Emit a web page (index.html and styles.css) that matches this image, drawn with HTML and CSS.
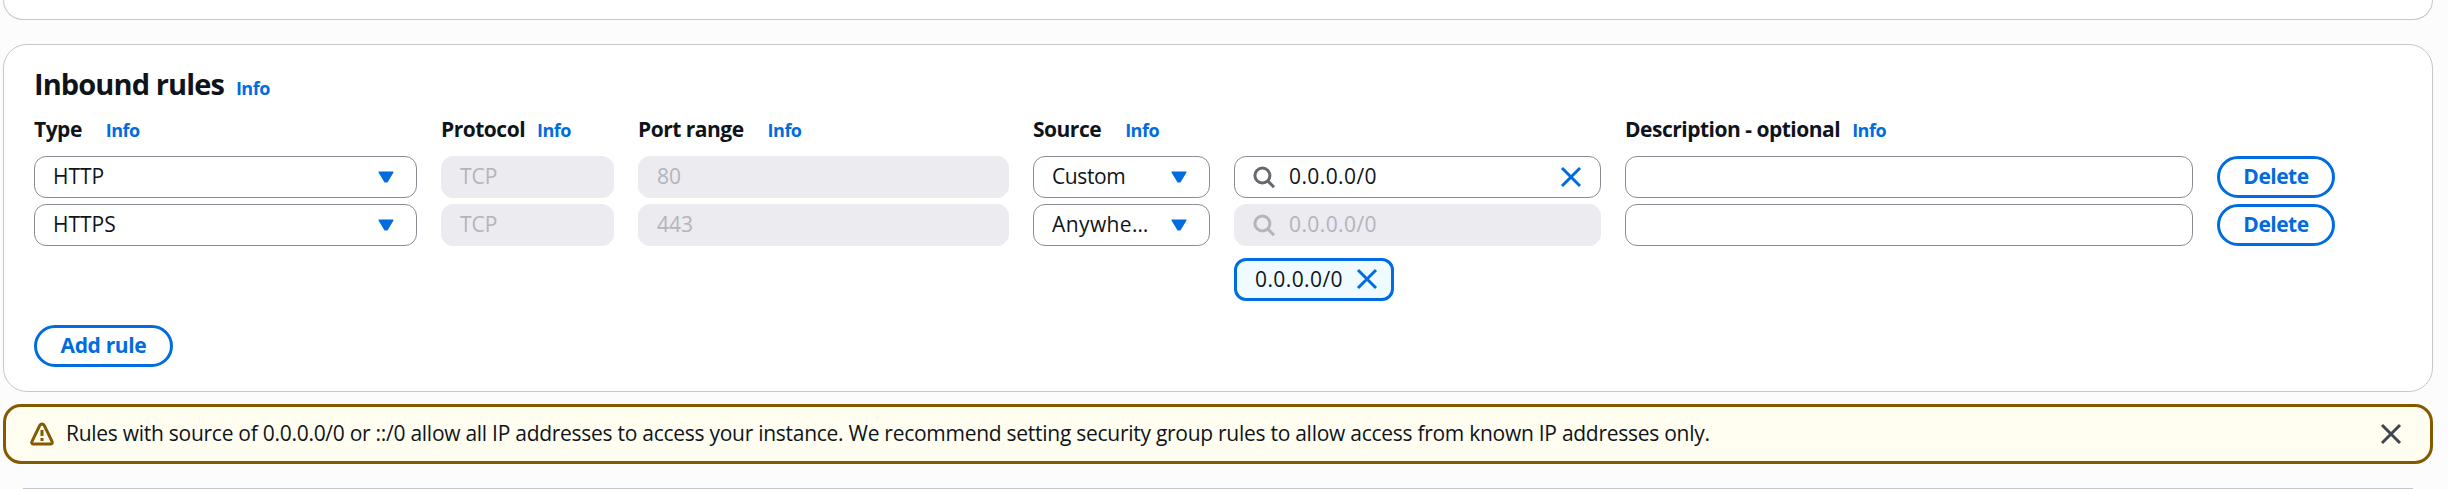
FILE: index.html
```html
<!DOCTYPE html>
<html lang="en">
<head>
<meta charset="utf-8">
<title>Inbound rules</title>
<link rel="stylesheet" href="styles.css">
</head>
<body>
<svg class="defs" width="0" height="0">
  <symbol id="caret" viewBox="0 0 16 12"><path d="M1.2 1.2h13.6L8.9 10.8H7.1z" fill="currentColor" stroke="currentColor" stroke-width="1.6" stroke-linejoin="round"/></symbol>
  <symbol id="close" viewBox="0 0 24 24"><path d="M3 3l18 18M21 3L3 21" fill="none" stroke="currentColor" stroke-width="3"/></symbol>
  <symbol id="search" viewBox="0 0 24 24"><circle cx="10.4" cy="10.5" r="7.5" fill="none" stroke="currentColor" stroke-width="3"/><path d="M15.4 15.6l6.6 6.6" fill="none" stroke="currentColor" stroke-width="3"/></symbol>
  <symbol id="warning" viewBox="0 0 24 24"><path d="M12 2 Q10.6 2 9.9 3.2L1.9 19.6Q1.2 21.8 3.2 22H20.8Q22.8 21.8 22.1 19.6L14.1 3.2Q13.4 2 12 2z" fill="none" stroke="currentColor" stroke-width="3" stroke-linejoin="round"/><path d="M12 8v6M12 16v3" fill="none" stroke="currentColor" stroke-width="3"/></symbol>
</svg>
<main class="page">
  <section class="panel panel-prev"></section>
  <section class="panel rules">
    <header class="title"><h2>Inbound rules</h2><a class="info">Info</a></header>
    <div class="grid">
      <div class="label wide">Type <a class="info">Info</a></div>
      <div class="label">Protocol <a class="info">Info</a></div>
      <div class="label wide">Port range <a class="info">Info</a></div>
      <div class="label wide">Source <a class="info">Info</a></div>
      <div></div>
      <div class="label">Description - optional <a class="info">Info</a></div>
      <div></div>

      <div class="field"><span>HTTP</span><svg class="caret"><use href="#caret"/></svg></div>
      <div class="field disabled"><span>TCP</span></div>
      <div class="field disabled"><span>80</span></div>
      <div class="field"><span class="tight">Custom</span><svg class="caret"><use href="#caret"/></svg></div>
      <div class="field search"><svg class="icon glass"><use href="#search"/></svg><span class="cidr">0.0.0.0/0</span><svg class="icon clear"><use href="#close"/></svg></div>
      <div class="field"></div>
      <button class="btn delete">Delete</button>

      <div class="field"><span>HTTPS</span><svg class="caret"><use href="#caret"/></svg></div>
      <div class="field disabled"><span>TCP</span></div>
      <div class="field disabled"><span>443</span></div>
      <div class="field"><span class="loose">Anywhe…</span><svg class="caret"><use href="#caret"/></svg></div>
      <div class="source">
        <div class="field search disabled"><svg class="icon glass"><use href="#search"/></svg><span class="cidr">0.0.0.0/0</span></div>
        <div class="token"><span class="cidr">0.0.0.0/0</span><svg class="icon"><use href="#close"/></svg></div>
      </div>
      <div class="field"></div>
      <button class="btn delete">Delete</button>
    </div>
    <button class="btn add">Add rule</button>
  </section>
  <section class="alert">
    <svg class="icon warn"><use href="#warning"/></svg>
    <p>Rules with source of 0.0.0.0/0 or ::/0 allow all IP addresses to access your instance. We recommend setting security group rules to allow access from known IP addresses only.</p>
    <svg class="icon dismiss"><use href="#close"/></svg>
  </section>
  <div class="panel-next"></div>
</main>
</body>
</html>
```
FILE: styles.css
```css
* { box-sizing: border-box; }
body {
  margin: 0;
  background: #fcfcfd;
  color: #0f141a;
  font: 21px/30px "Open Sans", "Noto Sans", sans-serif;
}
.defs { display: block; }
.page { width: 2430px; margin-left: 3px; }
.panel { border: 1px solid #c6c6cd; border-radius: 24px; background: #fff; }
.panel-prev { height: 20px; border-top: 0; border-radius: 0 0 24px 24px; }
.rules { height: 348px; margin-top: 24px; padding: 21px 30px 0; }
.title { display: flex; align-items: baseline; gap: 12px; height: 42px; }
h2 { margin: 0; font-size: 29px; line-height: 36px; font-weight: 700; letter-spacing: -0.9px; }
.info { color: #006ce0; font-size: 18px; font-weight: 700; line-height: 24px; letter-spacing: -0.5px; }
.grid {
  display: grid;
  grid-template-columns: 383px 173px 371px 177px 367px 568px 118px;
  column-gap: 24px;
  row-gap: 6px;
  align-items: start;
}
.label { display: flex; align-items: baseline; gap: 12px; height: 42px; padding-top: 6px; font-weight: 700; letter-spacing: -0.5px; white-space: nowrap; }
.wide { gap: 24px; }
.field {
  display: flex;
  align-items: center;
  height: 42px;
  padding: 0 22px 0 18px;
  border: 1px solid #8c8c94;
  border-radius: 12px;
  background: #fff;
}
.field span { flex: 1; padding-bottom: 2px; white-space: nowrap; }
.disabled { background: #ebebf0; border-color: #ebebf0; color: #b4b4bb; }
.caret { width: 16px; height: 12px; color: #006ce0; }
.icon { width: 24px; height: 24px; flex: none; }
.search { padding: 0 17px; }
.glass { margin-right: 13px; color: #656871; }
.disabled .glass { color: #b4b4bb; }
.clear { color: #006ce0; }
.cidr { letter-spacing: 0.4px; }
.tight { letter-spacing: -0.4px; }
.loose { letter-spacing: 0.4px; }
.token {
  display: flex;
  align-items: center;
  gap: 12px;
  width: 160px;
  height: 43px;
  margin-top: 12px;
  padding: 0 0 2px 18px;
  border: 3px solid #006ce0;
  border-radius: 12px;
  background: #f0fbff;
}
.token .icon { color: #006ce0; }
.btn {
  height: 42px;
  padding: 0 0 2px;
  border: 3px solid #006ce0;
  border-radius: 21px;
  background: #fff;
  color: #006ce0;
  font: 700 21px/30px "Open Sans", "Noto Sans", sans-serif;
}
.delete { width: 118px; letter-spacing: -0.5px; }
.add { display: block; width: 139px; margin-top: 24px; letter-spacing: -0.35px; }
.alert {
  display: flex;
  align-items: center;
  height: 60px;
  margin-top: 12px;
  padding: 0 27px 0 24px;
  border: 3px solid #855900;
  border-radius: 18px;
  background: #fffef0;
}
.alert p { flex: 1; margin: 0; padding: 0 0 2px; letter-spacing: -0.27px; white-space: nowrap; }
.warn { margin-right: 12px; color: #855900; }
.dismiss { color: #424650; }
.panel-next { height: 1px; margin: 24px 20px 0; background: #c6c6cd; }
```
